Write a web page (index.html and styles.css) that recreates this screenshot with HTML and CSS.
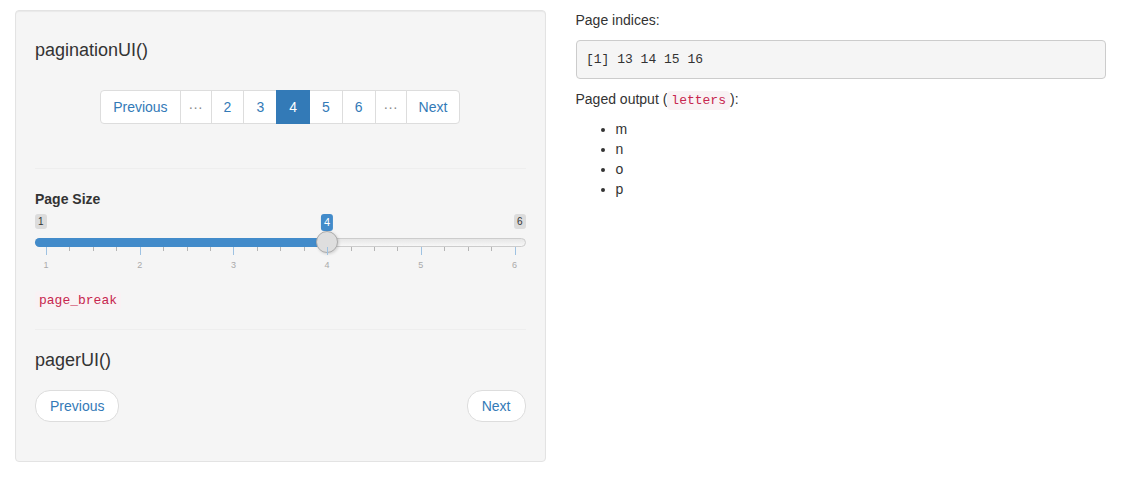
FILE: index.html
```html
<!DOCTYPE html>
<html>
<head>
<meta charset="utf-8">
<title>pagination</title>
<link rel="stylesheet" href="styles.css">
</head>
<body>
<div class="page">
  <div class="col">
    <div class="well">
      <h4 class="title">paginationUI()</h4>
      <div class="pagination-wrap">
        <ul class="pagination">
          <li><a>Previous</a></li>
          <li class="ellipsis"><span>&middot;&middot;&middot;</span></li>
          <li><a>2</a></li>
          <li><a>3</a></li>
          <li class="active"><a>4</a></li>
          <li><a>5</a></li>
          <li><a>6</a></li>
          <li class="ellipsis"><span>&middot;&middot;&middot;</span></li>
          <li><a>Next</a></li>
        </ul>
      </div>
      <hr class="rule">
      <div class="form-group">
        <label class="control-label">Page Size</label>
        <div class="irs">
          <span class="irs-min">1</span>
          <span class="irs-max">6</span>
          <span class="irs-line"></span>
          <span class="irs-bar" style="--p:0.6"></span>
          <span class="irs-single" style="--p:0.6">4</span>
          <span class="irs-handle" style="--p:0.6"></span>
          <span class="pol" style="--p:0"></span>
          <span class="pol small" style="--p:0.05"></span>
          <span class="pol small" style="--p:0.1"></span>
          <span class="pol small" style="--p:0.15"></span>
          <span class="pol" style="--p:0.2"></span>
          <span class="pol small" style="--p:0.25"></span>
          <span class="pol small" style="--p:0.3"></span>
          <span class="pol small" style="--p:0.35"></span>
          <span class="pol" style="--p:0.4"></span>
          <span class="pol small" style="--p:0.45"></span>
          <span class="pol small" style="--p:0.5"></span>
          <span class="pol small" style="--p:0.55"></span>
          <span class="pol" style="--p:0.6"></span>
          <span class="pol small" style="--p:0.65"></span>
          <span class="pol small" style="--p:0.7"></span>
          <span class="pol small" style="--p:0.75"></span>
          <span class="pol" style="--p:0.8"></span>
          <span class="pol small" style="--p:0.85"></span>
          <span class="pol small" style="--p:0.9"></span>
          <span class="pol small" style="--p:0.95"></span>
          <span class="pol" style="--p:1"></span>
          <span class="grid-text" style="--p:0">1</span>
          <span class="grid-text" style="--p:0.2">2</span>
          <span class="grid-text" style="--p:0.4">3</span>
          <span class="grid-text" style="--p:0.6">4</span>
          <span class="grid-text" style="--p:0.8">5</span>
          <span class="grid-text" style="--p:1">6</span>
        </div>
      </div>
      <div class="code-line"><code>page_break</code></div>
      <hr class="rule">
      <h4 class="title">pagerUI()</h4>
      <ul class="pager">
        <li><a>Previous</a></li>
        <li><a>Next</a></li>
      </ul>
    </div>
  </div>
  <div class="col">
    <p>Page indices:</p>
    <pre>[1] 13 14 15 16</pre>
    <p>Paged output (<code>letters</code>):</p>
    <ul class="letters">
      <li>m</li>
      <li>n</li>
      <li>o</li>
      <li>p</li>
    </ul>
  </div>
</div>
</body>
</html>
```
FILE: styles.css
```css
* { box-sizing: border-box; }

body {
  margin: 0;
  font-family: "Liberation Sans", Arial, sans-serif;
  font-size: 14px;
  line-height: 1.42857143;
  color: #333;
  background: #fff;
}

.page {
  display: flex;
  padding-top: 10px;
}

.col {
  width: 50%;
  padding: 0 15px;
}

.well {
  background: #f5f5f5;
  border: 1px solid #e3e3e3;
  border-radius: 4px;
  padding: 19px;
  box-shadow: inset 0 1px 1px rgba(0, 0, 0, 0.05);
}

.title {
  font-size: 18px;
  font-weight: 500;
  line-height: 20px;
  margin: 10px 0;
}

.pagination-wrap {
  display: flex;
  justify-content: center;
  padding: 20px 0 24px;
}

.pagination {
  display: flex;
  margin: 0;
  padding: 0;
  list-style: none;
}

.pagination li a,
.pagination li span {
  display: block;
  padding: 6px 12px;
  margin-left: -1px;
  line-height: 20px;
  color: #337ab7;
  background: #fff;
  border: 1px solid #ddd;
}

.pagination li:first-child a {
  margin-left: 0;
  border-radius: 4px 0 0 4px;
}

.pagination li:last-child a {
  border-radius: 0 4px 4px 0;
}

.pagination li.ellipsis span {
  padding: 6px 8px;
  color: #8a8a8a;
}

.pagination li.active a {
  position: relative;
  background: #337ab7;
  border-color: #337ab7;
  color: #fff;
}

.rule {
  margin: 20px 0;
  border: 0;
  border-top: 1px solid #eee;
  height: 0;
}

.form-group {
  margin-bottom: 15px;
}

.control-label {
  display: inline-block;
  font-weight: bold;
  margin-bottom: 5px;
}

.irs {
  position: relative;
  height: 60px;
  --track: calc(100% - 22px);
}

.irs-min,
.irs-max {
  position: absolute;
  top: 0;
  font-size: 10px;
  line-height: 1.333;
  padding: 1px 3px;
  border-radius: 3px;
  background: rgba(0, 0, 0, 0.1);
  color: #333;
}

.irs-min { left: 0; }
.irs-max { right: 0; }

.irs-single {
  position: absolute;
  top: 0;
  left: calc(11px + var(--track) * var(--p));
  transform: translateX(-50%);
  font-size: 11px;
  line-height: 1.333;
  padding: 1px 3px;
  border-radius: 3px;
  background: #428bca;
  color: #fff;
}

.irs-line {
  position: absolute;
  top: 24px;
  left: 0;
  right: 0;
  height: 9px;
  border: 1px solid #ccc;
  border-radius: 8px;
  background: linear-gradient(to bottom, #dedede -50%, #fff 150%);
}

.irs-bar {
  position: absolute;
  top: 24px;
  left: 0;
  width: calc(11px + var(--track) * var(--p));
  height: 9px;
  background: #428bca;
  border-radius: 8px 0 0 8px;
}

.irs-handle {
  position: absolute;
  top: 17px;
  left: calc(var(--track) * var(--p));
  width: 22px;
  height: 22px;
  border: 1px solid #ababab;
  border-radius: 50%;
  background: #dedede;
  box-shadow: 1px 1px 3px rgba(0, 0, 0, 0.15);
}

.pol {
  position: absolute;
  top: 33px;
  left: calc(11px + var(--track) * var(--p));
  width: 1px;
  height: 8px;
  background: #9ec2e2;
}

.pol.small {
  height: 4px;
  background: #b5b5b5;
}

.grid-text {
  position: absolute;
  top: 45px;
  left: calc(11px + var(--track) * var(--p));
  transform: translateX(-50%);
  font-size: 9px;
  line-height: 12px;
  color: #aaa;
}

.code-line {
  height: 20px;
  line-height: 20px;
}

code {
  font-family: "Liberation Mono", "Courier New", monospace;
  font-size: 13px;
  line-height: 1;
  padding: 2px 4px;
  color: #c7254e;
  background: #f9f2f4;
  border-radius: 4px;
}

.pager {
  display: flex;
  justify-content: space-between;
  margin: 20px 0;
  padding: 0;
  list-style: none;
}

.pager li a {
  display: inline-block;
  padding: 5px 14px;
  line-height: 20px;
  color: #337ab7;
  background: #fff;
  border: 1px solid #ddd;
  border-radius: 15px;
}

p {
  margin: 0 0 10px;
  line-height: 20px;
}

pre {
  margin: 0 0 10px;
  padding: 9.5px;
  font-family: "Liberation Mono", "Courier New", monospace;
  font-size: 13px;
  line-height: 18px;
  color: #333;
  background: #f5f5f5;
  border: 1px solid #ccc;
  border-radius: 4px;
}

.letters {
  margin: 0 0 10px;
  padding-left: 40px;
  line-height: 20px;
}
```
